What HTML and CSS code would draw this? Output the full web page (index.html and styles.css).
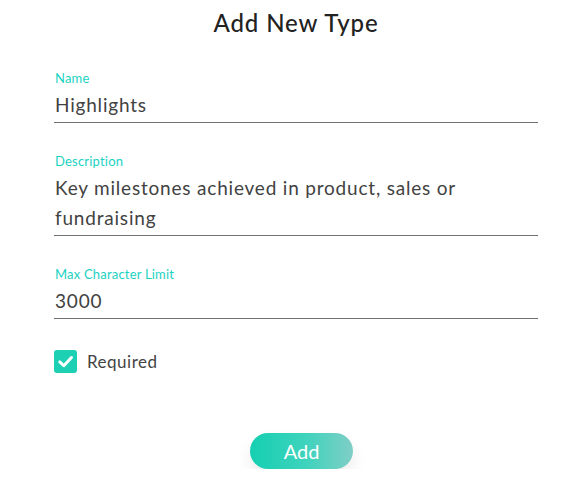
FILE: index.html
```html
<!DOCTYPE html>
<html>
<head>
<meta charset="utf-8">
<link rel="stylesheet" href="styles.css">
</head>
<body>
<div class="modal">
  <h1 class="title">Add New Type</h1>
  <div class="field">
    <label class="label">Name</label>
    <div class="value">Highlights</div>
  </div>
  <div class="field">
    <label class="label">Description</label>
    <div class="value">Key milestones achieved in product, sales or fundraising</div>
  </div>
  <div class="field">
    <label class="label">Max Character Limit</label>
    <div class="value">3000</div>
  </div>
  <div class="check">
    <span class="box">
      <svg width="17" height="17" viewBox="0 0 16 16"><path d="M2.6 8.4 L6.4 12 L13.6 4.2" fill="none" stroke="#fff" stroke-width="2.8" stroke-linecap="round" stroke-linejoin="round"/></svg>
    </span>
    <span class="check-label">Required</span>
  </div>
  <div class="actions">
    <button class="btn">Add</button>
  </div>
</div>
</body>
</html>
```

FILE: styles.css
```css
html, body {
  margin: 0;
  padding: 0;
  background: #fff;
}
body {
  font-family: "Lato", "Open Sans", sans-serif;
  color: #444;
}
.modal {
  width: 484px;
  padding: 0 0 0 54px;
}
.title {
  margin: 0;
  padding-top: 8px;
  font-size: 24px;
  font-weight: 500;
  color: #222;
  text-align: center;
  line-height: 30px;
  letter-spacing: 0.9px;
}
.field {
  display: flex;
  flex-direction: column;
  border-bottom: 1px solid #707070;
  margin-top: 32px;
}
.field + .field {
  margin-top: 30px;
}
.label {
  font-size: 13px;
  color: #1ad2c2;
  line-height: 16px;
  padding-left: 1px;
  letter-spacing: 0.2px;
}
.value {
  font-size: 19px;
  line-height: 30px;
  margin-top: 4px;
  padding: 0 0 2px 1px;
  color: #424242;
  letter-spacing: 0.8px;
}
.check {
  display: flex;
  align-items: center;
  gap: 10px;
  margin-top: 31px;
}
.box {
  width: 23px;
  height: 23px;
  border-radius: 3px;
  background: #1dcfb3;
  display: flex;
  align-items: center;
  justify-content: center;
}
.check-label {
  font-size: 17px;
  color: #444;
  letter-spacing: 0.5px;
}
.actions {
  display: flex;
  justify-content: center;
  margin-top: 60px;
  padding-left: 11px;
}
.btn {
  width: 103px;
  height: 36px;
  border: none;
  border-radius: 18px;
  background: linear-gradient(90deg, #15cfb1 0%, #3fd3bd 55%, #80cec6 100%);
  color: #fff;
  font-family: "Lato", sans-serif;
  font-size: 20px;
  box-shadow: 0 8px 16px rgba(0,0,0,0.08);
  padding: 0;
}
```
